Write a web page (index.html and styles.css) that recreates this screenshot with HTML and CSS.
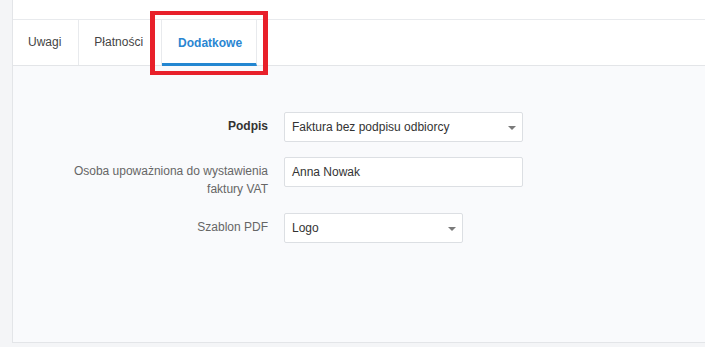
FILE: index.html
```html
<!DOCTYPE html>
<html lang="pl">
<head>
<meta charset="utf-8">
<title>Dodatkowe</title>
<link rel="stylesheet" href="styles.css">
</head>
<body>
<div class="page">
  <div class="side"></div>
  <div class="panel">
    <div class="topbar"></div>
    <nav class="tabs">
      <div class="tab">Uwagi</div>
      <div class="tab">Płatności</div>
      <div class="tab active">Dodatkowe</div>
    </nav>
    <div class="content">
      <form class="form">
        <label class="lbl strong">Podpis</label>
        <div class="field w-wide select">Faktura bez podpisu odbiorcy</div>
        <label class="lbl">Osoba upoważniona do wystawienia faktury VAT</label>
        <div class="field w-wide">Anna Nowak</div>
        <label class="lbl">Szablon PDF</label>
        <div class="field w-narrow select">Logo</div>
      </form>
    </div>
  </div>
  <div class="highlight"></div>
</div>
</body>
</html>
```
FILE: styles.css
```css
* { box-sizing: border-box; }
html, body { margin: 0; padding: 0; }
body {
  background: #f4f5f7;
  font-family: "Liberation Sans", Arial, sans-serif;
  font-size: 12px;
  color: #333;
  width: 705px;
  height: 347px;
  overflow: hidden;
}
.page {
  position: relative;
  display: flex;
  height: 347px;
}
.side {
  width: 12px;
  flex: none;
}
.panel {
  flex: 1;
  height: 343px;
  border-left: 1px solid #e3e5e8;
  border-bottom: 1px solid #e3e5e8;
  display: flex;
  flex-direction: column;
  background: #f9fafc;
}
.topbar {
  height: 20px;
  background: #fff;
  border-bottom: 1px solid #e8eaed;
}
.tabs {
  height: 46px;
  background: #fff;
  border-bottom: 1px solid #e3e5e8;
  display: flex;
}
.tab {
  display: flex;
  align-items: center;
  padding: 0 18px 1px 15px;
  border-right: 1px solid #e8eaed;
  color: #444;
}
.tab:first-child { padding-right: 17px; }
.tab.active {
  color: #2a86d2;
  font-weight: bold;
  padding: 2px 14px 0 16px;
  border-bottom: 3px solid #2386d1;
  margin-bottom: -1px;
}
.content {
  flex: 1;
  padding: 46px 0 0 55px;
}
.form {
  display: grid;
  grid-template-columns: 200px auto;
  column-gap: 16px;
  row-gap: 15px;
  align-items: start;
  justify-items: start;
}
.lbl {
  justify-self: end;
  text-align: right;
  padding-top: 5px;
  line-height: 18px;
  color: #666;
}
.lbl.strong {
  font-weight: bold;
  color: #333;
}
.field {
  height: 30px;
  background: #fff;
  border: 1px solid #dcdfe3;
  border-radius: 2px;
  padding: 0 7px;
  display: flex;
  align-items: center;
  color: #333;
  position: relative;
}
.w-wide { width: 239px; }
.w-narrow { width: 179px; }
.select::after {
  content: "";
  position: absolute;
  right: 6px;
  top: 13px;
  border-top: 4px solid #7a7a7a;
  border-left: 4px solid transparent;
  border-right: 4px solid transparent;
}
.highlight {
  position: absolute;
  left: 150px;
  top: 11px;
  width: 118px;
  height: 64px;
  border: 4px solid #e8202a;
  border-left-width: 5px;
  border-right-width: 5px;
}
```
